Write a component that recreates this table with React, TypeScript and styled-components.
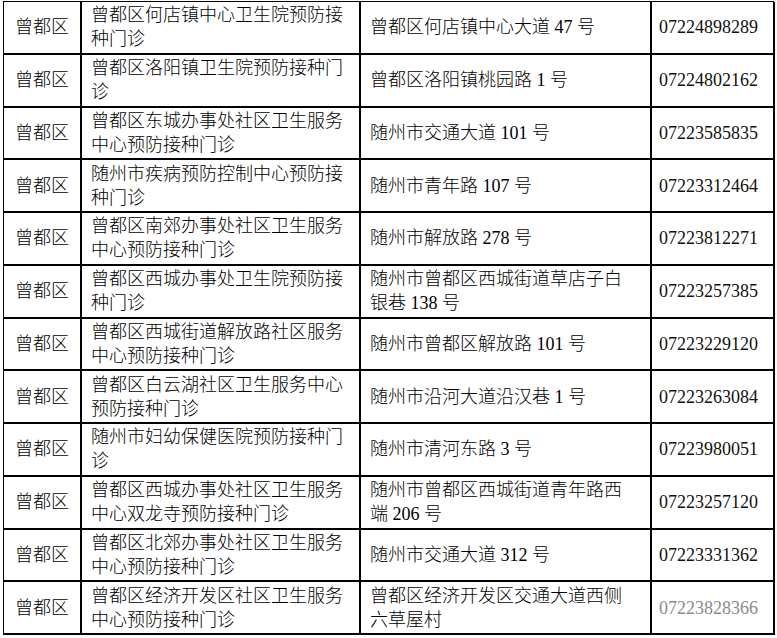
import React from 'react';
import styled, { createGlobalStyle } from 'styled-components';

const GlobalStyle = createGlobalStyle`
    html, body {
        margin: 0;
        padding: 0;
        background: #fff;
    }
`;

const Page = styled.div`
    padding: 1px 0 0 3px;
    font-family: 'Liberation Serif', 'Noto Sans CJK SC', serif;
    font-size: 18px;
    font-weight: 300;
    line-height: 24px;
    color: #000;
`;

const Sheet = styled.div`
    display: grid;
    grid-template-columns: 78px 279px 291px 123px;
    grid-template-rows: repeat(12, 52.75px);
    width: 771px;
    border-top: 1px solid #000;
    border-left: 1px solid #000;
    box-sizing: border-box;
`;

const Cell = styled.div<{ $align?: 'center' | 'left'; $padRight?: number; $faded?: boolean }>`
    display: flex;
    align-items: center;
    justify-content: ${({ $align }) => ($align === 'center' ? 'center' : 'flex-start')};
    box-sizing: border-box;
    border-right: 2px solid #000;
    border-bottom: 2px solid #000;
    padding: 0 ${({ $padRight }) => $padRight ?? 8}px 0 ${({ $align }) => ($align === 'center' ? 0 : 9)}px;
    color: ${({ $faded }) => ($faded ? '#8a8a8a' : '#000')};
    overflow: hidden;
`;

const Phone = styled(Cell)`
    padding-left: 7px;
    font-weight: 400;
    color: ${({ $faded }) => ($faded ? '#8a8a8a' : '#111')};
`;

type Row = { district: string; name: string; address: string; phone: string };

const rows: Row[] = [
    { district: '曾都区', name: '曾都区何店镇中心卫生院预防接种门诊', address: '曾都区何店镇中心大道 47 号', phone: '07224898289' },
    { district: '曾都区', name: '曾都区洛阳镇卫生院预防接种门诊', address: '曾都区洛阳镇桃园路 1 号', phone: '07224802162' },
    { district: '曾都区', name: '曾都区东城办事处社区卫生服务中心预防接种门诊', address: '随州市交通大道 101 号', phone: '07223585835' },
    { district: '曾都区', name: '随州市疾病预防控制中心预防接种门诊', address: '随州市青年路 107 号', phone: '07223312464' },
    { district: '曾都区', name: '曾都区南郊办事处社区卫生服务中心预防接种门诊', address: '随州市解放路 278 号', phone: '07223812271' },
    { district: '曾都区', name: '曾都区西城办事处卫生院预防接种门诊', address: '随州市曾都区西城街道草店子白银巷 138 号', phone: '07223257385' },
    { district: '曾都区', name: '曾都区西城街道解放路社区服务中心预防接种门诊', address: '随州市曾都区解放路 101 号', phone: '07223229120' },
    { district: '曾都区', name: '曾都区白云湖社区卫生服务中心预防接种门诊', address: '随州市沿河大道沿汉巷 1 号', phone: '07223263084' },
    { district: '曾都区', name: '随州市妇幼保健医院预防接种门诊', address: '随州市清河东路 3 号', phone: '07223980051' },
    { district: '曾都区', name: '曾都区西城办事处社区卫生服务中心双龙寺预防接种门诊', address: '随州市曾都区西城街道青年路西端 206 号', phone: '07223257120' },
    { district: '曾都区', name: '曾都区北郊办事处社区卫生服务中心预防接种门诊', address: '随州市交通大道 312 号', phone: '07223331362' },
    { district: '曾都区', name: '曾都区经济开发区社区卫生服务中心预防接种门诊', address: '曾都区经济开发区交通大道西侧六草屋村', phone: '07223828366' },
];

const App: React.FC = () => {
    return (
        <>
            <GlobalStyle />
            <Page>
                <Sheet>
                    {rows.map((row, i) => (
                        <React.Fragment key={i}>
                            <Cell $align="center" $padRight={0}>{row.district}</Cell>
                            <Cell $padRight={8}>{row.name}</Cell>
                            <Cell $padRight={20}>{row.address}</Cell>
                            <Phone $faded={i === rows.length - 1}>{row.phone}</Phone>
                        </React.Fragment>
                    ))}
                </Sheet>
            </Page>
        </>
    );
};

export default App;
